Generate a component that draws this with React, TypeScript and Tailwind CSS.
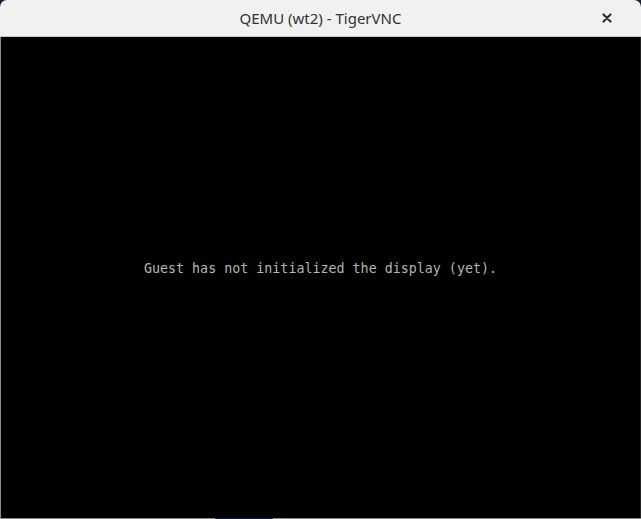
export default function App() {
    return (
        <div className="w-[641px] h-[519px] bg-[#14203a] flex flex-col overflow-hidden">
            <div className="h-[37px] shrink-0 rounded-t-[7px] bg-[#f1f1f0] border-b border-[#c9c9c7] flex items-center relative">
                <div className="flex-1 text-center text-[15px] text-[#2e3436] font-['Noto_Sans',sans-serif] leading-none pt-[1px]">
                    QEMU (wt2) - TigerVNC
                </div>
                <div className="absolute right-[26px] top-[10px] w-[16px] h-[16px] flex items-center justify-center">
                    <svg width="10" height="10" viewBox="0 0 10 10">
                        <path d="M1.5 1.5 L8.5 8.5 M8.5 1.5 L1.5 8.5" stroke="#2e3436" strokeWidth="2.2" strokeLinecap="round" />
                    </svg>
                </div>
            </div>
            <div className="flex-1 bg-black border-l border-[#8a8a8a] border-r border-r-[#222] flex justify-center">
                <div className="pt-[224px] text-[13.33px] leading-[16px] font-medium text-[#b4b4b4] font-['DejaVu_Sans_Mono',monospace] whitespace-pre">
                    Guest has not initialized the display (yet).
                </div>
            </div>
            <div className="h-[1px] shrink-0 flex">
                <div className="w-[215px] bg-[#8c8c8c]" />
                <div className="w-[58px] bg-[#0d1a3a]" />
                <div className="flex-1 bg-[#8c8c8c]" />
            </div>
        </div>
    );
}
